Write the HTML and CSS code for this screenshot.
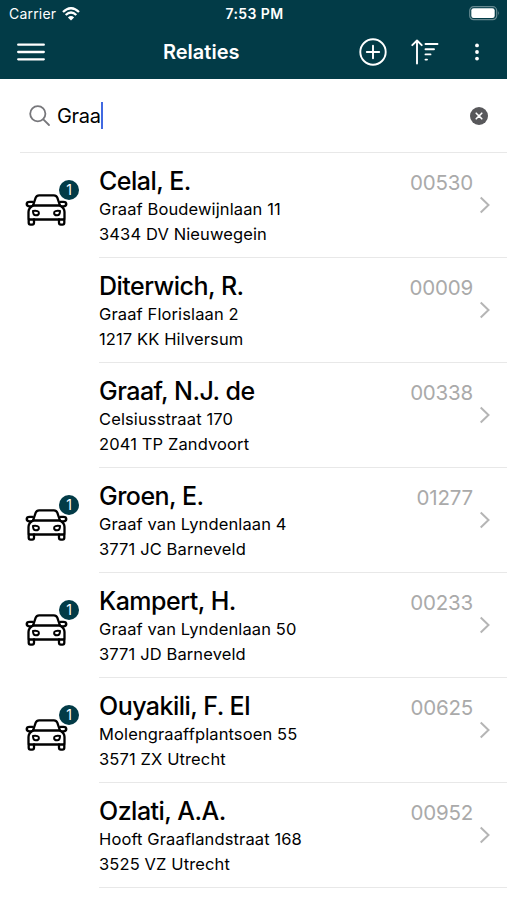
FILE: index.html
```
<!DOCTYPE html>
<html lang="nl">
<head>
    <meta charset="UTF-8">
    <meta name="viewport" content="width=device-width, initial-scale=1.0">
    <title>Relaties</title>
    <link rel="stylesheet" href="styles.css">
</head>
<body>
    <!-- shared icons -->
    <svg class="defs" width="0" height="0">
        <symbol id="car" viewBox="0 0 42 32">
            <g fill="none" stroke="#000" stroke-width="2.3" stroke-linejoin="round" stroke-linecap="round">
                <path d="M7.5 11.5 10.2 3.6Q11.1 1.3 13.600 1.3H28.400Q30.900 1.300 31.800 3.600L34.500 11.500Z"/>
                <path d="M7.500 11.500Q3 14 3 18V24Q3 25.500 4.500 25.500H37.500Q39 25.500 39 24V18Q39 14 34.500 11.500"/>
                <path d="M7 7.900H4.200Q1.200 7.900 1.200 10.100 1.200 12.300 4.200 12.300H6M35 7.900H37.800Q40.800 7.900 40.800 10.100 40.800 12.300 37.800 12.300H36"/>
                <path d="M3.200 25.500V28.700Q3.200 30.600 5 30.600H6.700Q8.500 30.600 8.500 28.700V25.500M33.500 25.500V28.700Q33.500 30.600 35.300 30.600H37Q38.800 30.600 38.800 28.700V25.500"/>
                <path d="M7.500 17Q13.400 16.300 13.400 18.900 13.400 21.300 10.300 21.300 7.500 21.300 7.500 17ZM34.500 17Q28.600 16.300 28.600 18.900 28.600 21.300 31.700 21.300 34.500 21.300 34.500 17Z" stroke-width="2"/>
            </g>
        </symbol>
        <symbol id="chevron" viewBox="0 0 12 18">
            <path d="M1.700 1.500 9.500 9 1.700 16.500" fill="none" stroke="#b5b5b5" stroke-width="2"/>
        </symbol>
    </svg>

    <header class="header">
        <div class="status">
            <div class="carrier">
                <span>Carrier</span>
                <svg width="18" height="14" viewBox="0 0 18 14" fill="none" stroke="#fff" stroke-width="2.300">
                    <path d="M1 5Q9-2.600 17 5M3.700 8Q9 3 14.300 8"/>
                    <path d="M9 13.600 5.900 10.400Q9 7.800 12.100 10.400Z" fill="#fff" stroke="none"/>
                </svg>
            </div>
            <div class="time">7:53 PM</div>
            <svg class="battery" width="31" height="15" viewBox="0 0 31 15">
                <rect x="0.700" y="0.700" width="27" height="13" rx="4" fill="none" stroke="#668991" stroke-width="1.200"/>
                <rect x="2.300" y="2.300" width="23.400" height="9.800" rx="2.300" fill="#fff"/>
                <path d="M29 5Q30.800 7.200 29 9.400Z" fill="#668991"/>
            </svg>
        </div>
        <div class="navbar">
            <svg class="menu" width="28" height="20" viewBox="0 0 28 20" stroke="#fff" stroke-width="2.300" stroke-linecap="round">
                <path d="M1.200 2.700H26.800M1.200 10H26.800M1.200 17.300H26.800"/>
            </svg>
            <h1 class="title">Relaties</h1>
            <div class="actions">
                <svg width="28" height="28" viewBox="0 0 28 28" fill="none" stroke="#fff" stroke-width="1.900" stroke-linecap="round">
                    <circle cx="14" cy="14" r="12.700"/>
                    <path d="M7.800 14H20.200M14 7.800V20.200"/>
                </svg>
                <svg width="28" height="26" viewBox="0 0 28 26" fill="none" stroke="#fff" stroke-width="1.900" stroke-linecap="round" stroke-linejoin="round">
                    <path d="M6 24.500V1.500M1.300 6.200 6 1.500 10.700 6.200M14.500 5H26.500M14.500 10.200H23M14.500 15.400H19.500M14.500 20.600H16"/>
                </svg>
                <svg width="6" height="18" viewBox="0 0 6 18" fill="#fff">
                    <circle cx="3" cy="2.400" r="1.900"/>
                    <circle cx="3" cy="9" r="1.900"/>
                    <circle cx="3" cy="15.600" r="1.900"/>
                </svg>
            </div>
        </div>
    </header>

    <div class="search">
        <svg width="22" height="22" viewBox="0 0 22 22" fill="none" stroke="#77777b" stroke-width="1.800" stroke-linecap="round">
            <circle cx="8.800" cy="8.800" r="7.600"/>
            <path d="M14.300 14.300 20 20"/>
        </svg>
        <span class="query">Graa</span>
        <span class="cursor"></span>
        <svg class="clear" width="18" height="18" viewBox="0 0 18 18">
            <circle cx="9" cy="9" r="9" fill="#58585b"/>
            <path d="M6.200 6.200 11.800 11.800M11.800 6.200 6.200 11.800" stroke="#fff" stroke-width="1.600" stroke-linecap="round"/>
        </svg>
    </div>

    <ul class="list">
        <li class="row">
            <div class="thumb"><svg class="car"><use href="#car"/></svg><span class="badge">1</span></div>
            <div class="content">
                <div class="info">
                    <h2>Celal, E.</h2>
                    <p>Graaf Boudewijnlaan 11</p>
                    <p>3434 DV Nieuwegein</p>
                </div>
                <span class="number">00530</span>
                <svg class="chevron"><use href="#chevron"/></svg>
            </div>
        </li>
        <li class="row">
            <div class="thumb"></div>
            <div class="content">
                <div class="info">
                    <h2>Diterwich, R.</h2>
                    <p>Graaf Florislaan 2</p>
                    <p>1217 KK Hilversum</p>
                </div>
                <span class="number">00009</span>
                <svg class="chevron"><use href="#chevron"/></svg>
            </div>
        </li>
        <li class="row">
            <div class="thumb"></div>
            <div class="content">
                <div class="info">
                    <h2>Graaf, N.J. de</h2>
                    <p>Celsiusstraat 170</p>
                    <p>2041 TP Zandvoort</p>
                </div>
                <span class="number">00338</span>
                <svg class="chevron"><use href="#chevron"/></svg>
            </div>
        </li>
        <li class="row">
            <div class="thumb"><svg class="car"><use href="#car"/></svg><span class="badge">1</span></div>
            <div class="content">
                <div class="info">
                    <h2>Groen, E.</h2>
                    <p>Graaf van Lyndenlaan 4</p>
                    <p>3771 JC Barneveld</p>
                </div>
                <span class="number">01277</span>
                <svg class="chevron"><use href="#chevron"/></svg>
            </div>
        </li>
        <li class="row">
            <div class="thumb"><svg class="car"><use href="#car"/></svg><span class="badge">1</span></div>
            <div class="content">
                <div class="info">
                    <h2>Kampert, H.</h2>
                    <p>Graaf van Lyndenlaan 50</p>
                    <p>3771 JD Barneveld</p>
                </div>
                <span class="number">00233</span>
                <svg class="chevron"><use href="#chevron"/></svg>
            </div>
        </li>
        <li class="row">
            <div class="thumb"><svg class="car"><use href="#car"/></svg><span class="badge">1</span></div>
            <div class="content">
                <div class="info">
                    <h2>Ouyakili, F. El</h2>
                    <p>Molengraaffplantsoen 55</p>
                    <p>3571 ZX Utrecht</p>
                </div>
                <span class="number">00625</span>
                <svg class="chevron"><use href="#chevron"/></svg>
            </div>
        </li>
        <li class="row">
            <div class="thumb"></div>
            <div class="content">
                <div class="info">
                    <h2>Ozlati, A.A.</h2>
                    <p>Hooft Graaflandstraat 168</p>
                    <p>3525 VZ Utrecht</p>
                </div>
                <span class="number">00952</span>
                <svg class="chevron"><use href="#chevron"/></svg>
            </div>
        </li>
    </ul>
</body>
</html>
```
FILE: styles.css
```
* {
    box-sizing: border-box;
}
body {
    margin: 0;
    height: 900px;
    overflow: hidden;
    background-color: #fff;
    color: #000;
    font-family: Inter, "Liberation Sans", sans-serif;
}
h1, h2, p, ul {
    margin: 0;
    padding: 0;
}
svg {
    display: block;
    flex-shrink: 0;
}
.defs {
    display: none;
}
.header {
    height: 79px;
    background-color: #023b47;
    color: #fff;
}
.status {
    display: grid;
    grid-template-columns: 1fr auto 1fr;
    align-items: center;
    height: 27px;
    padding: 0 7px 0 9px;
    font-size: 14px;
}
.carrier {
    display: flex;
    align-items: center;
    gap: 6px;
    letter-spacing: 0.2px;
}
.time {
    font-size: 14px;
    font-weight: 600;
    letter-spacing: 0.4px;
}
.battery {
    justify-self: end;
}
.navbar {
    display: grid;
    grid-template-columns: 146px auto 1fr;
    align-items: center;
    height: 50px;
    padding: 0 27px 0 17px;
}
.title {
    font-size: 20px;
    font-weight: 600;
}
.actions {
    display: flex;
    align-items: center;
    justify-content: flex-end;
    gap: 24px;
}
.actions svg:last-child {
    margin-left: 11px;
}
.search {
    display: flex;
    align-items: center;
    height: 74px;
    margin-left: 20px;
    padding: 0 19px 0 9px;
    border-bottom: 1px solid #e8e8e8;
}
.query {
    margin-left: 6px;
    font-size: 20px;
    letter-spacing: -0.3px;
}
.cursor {
    width: 2px;
    height: 27px;
    background-color: #4169e1;
}
.clear {
    margin-left: auto;
}
.list {
    list-style: none;
}
.row {
    display: flex;
    height: 105px;
}
.thumb {
    position: relative;
    width: 99px;
    padding: 41px 0 0 25px;
}
.car {
    width: 43px;
    height: 32px;
}
.badge {
    position: absolute;
    top: 27px;
    left: 59px;
    width: 20px;
    height: 20px;
    border-radius: 50%;
    background-color: #023b47;
    color: #fff;
    font-size: 14px;
    line-height: 20px;
    text-align: center;
}
.content {
    display: flex;
    flex: 1;
    border-bottom: 1px solid #e8e8e8;
}
.info {
    flex: 1;
    padding-top: 12px;
}
.info h2 {
    font-size: 25px;
    font-weight: 500;
    line-height: 32px;
    letter-spacing: -0.52px;
}
.info p {
    font-size: 16.5px;
    line-height: 24.5px;
    letter-spacing: 0.12px;
}
.number {
    padding-top: 17px;
    color: #aaa;
    font-size: 20.5px;
    line-height: 26px;
    letter-spacing: -0.2px;
}
.chevron {
    width: 12px;
    height: 18px;
    margin: 43px 16px 0 6px;
}
```
